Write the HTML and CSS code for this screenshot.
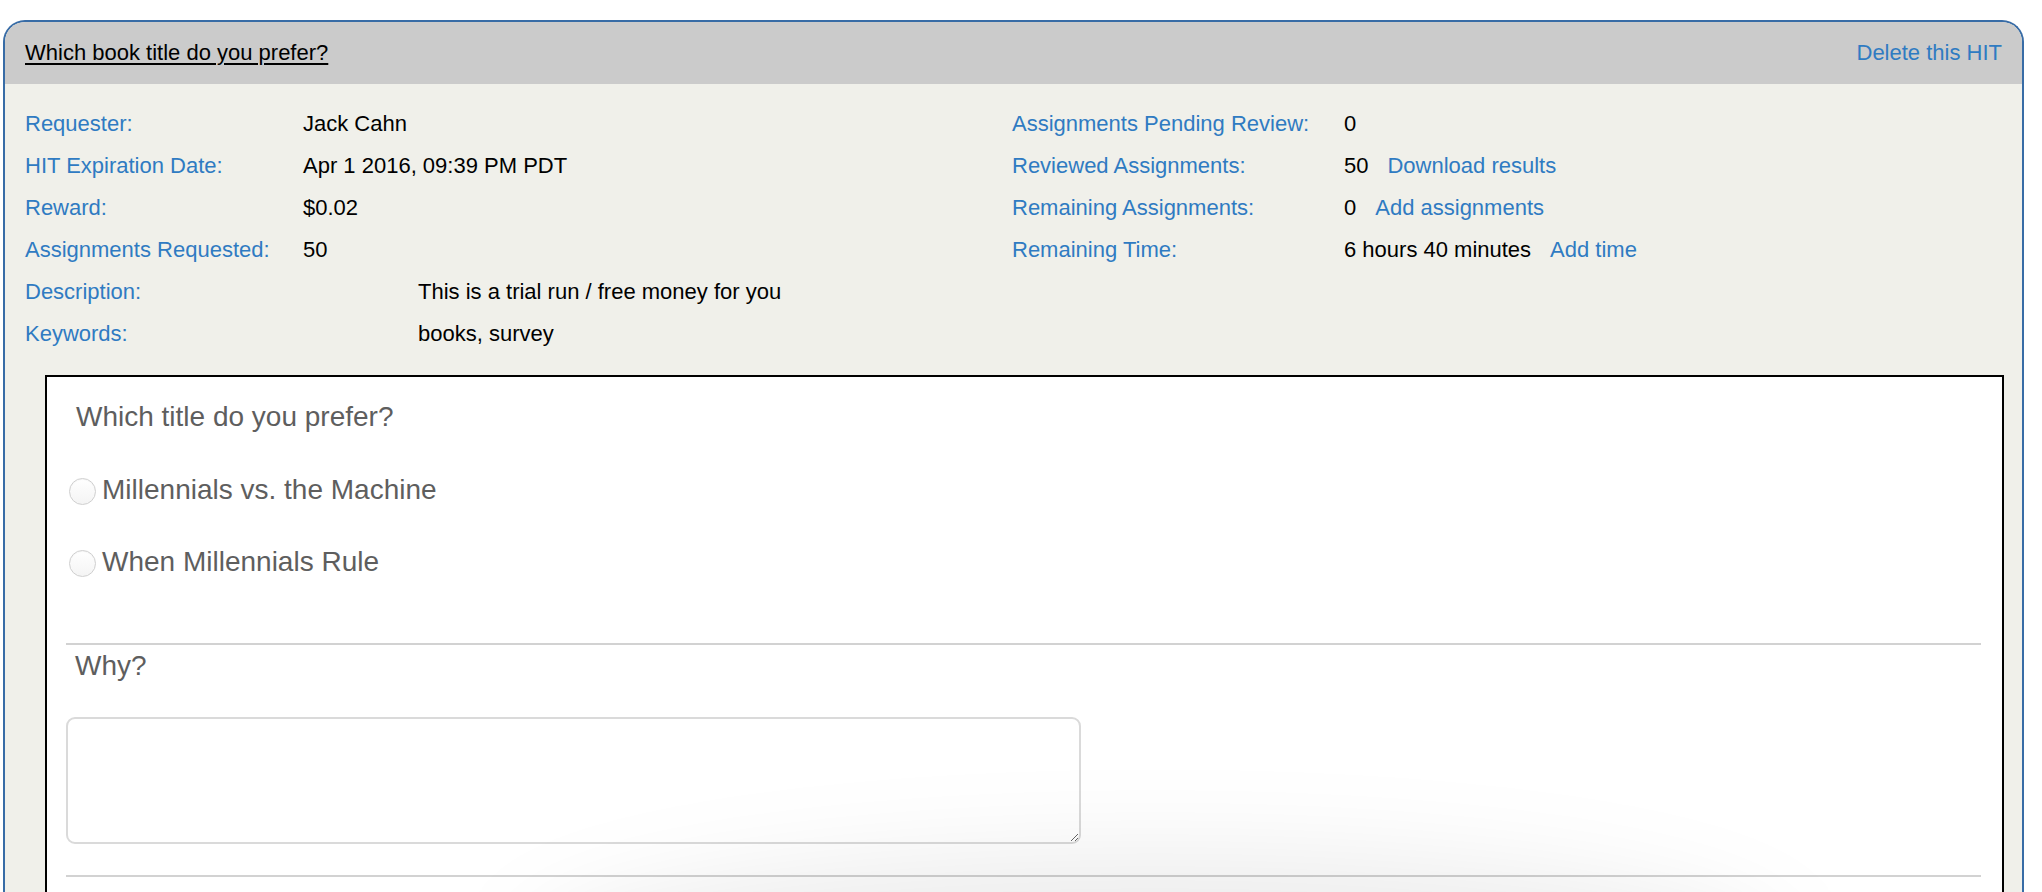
FILE: index.html
```html
<!DOCTYPE html>
<html lang="en">
<head>
<meta charset="utf-8">
<title>Which book title do you prefer?</title>
<link rel="stylesheet" href="styles.css">
</head>
<body>
<div class="hit">
  <div class="hit-head">
    <a class="hit-title" href="#">Which book title do you prefer?</a>
    <a class="link" href="#">Delete this HIT</a>
  </div>
  <div class="hit-body">
    <div class="meta-top">
      <div class="lbl">Requester:</div><div class="val">Jack Cahn</div>
      <div class="lbl">Assignments Pending Review:</div><div class="val">0</div>

      <div class="lbl">HIT Expiration Date:</div><div class="val">Apr 1 2016, 09:39 PM PDT</div>
      <div class="lbl">Reviewed Assignments:</div><div class="val">50<a class="link act" href="#">Download results</a></div>

      <div class="lbl">Reward:</div><div class="val">$0.02</div>
      <div class="lbl">Remaining Assignments:</div><div class="val">0<a class="link act" href="#">Add assignments</a></div>

      <div class="lbl">Assignments Requested:</div><div class="val">50</div>
      <div class="lbl">Remaining Time:</div><div class="val">6 hours 40 minutes<a class="link act" href="#">Add time</a></div>
    </div>
    <div class="meta-bottom">
      <div class="lbl">Description:</div><div class="val">This is a trial run / free money for you</div>
      <div class="lbl">Keywords:</div><div class="val">books, survey</div>
    </div>

    <div class="preview">
      <div class="q-title">Which title do you prefer?</div>
      <label class="opt first"><input type="radio" name="title"><span>Millennials vs. the Machine</span></label>
      <label class="opt"><input type="radio" name="title"><span>When Millennials Rule</span></label>
      <div class="rule r1"></div>
      <div class="q-why">Why?</div>
      <textarea class="why-box"></textarea>
      <div class="rule r2"></div>
    </div>
  </div>
</div>
<div class="shade"></div>
</body>
</html>
```

FILE: styles.css
```css
html, body {
  margin: 0;
  padding: 0;
  background: #ffffff;
  font-family: "Liberation Sans", Arial, Helvetica, sans-serif;
  font-size: 22px;
  color: #000;
  overflow: hidden;
  height: 892px;
}

body {
  padding: 20px 18px 0 3px;
  box-sizing: border-box;
  position: relative;
}

.hit {
  border: 2px solid #386ca6;
  border-bottom: none;
  border-radius: 22px 22px 0 0;
  background: #f0f0ea;
  overflow: hidden;
  height: 900px;
}

.hit-head {
  background: #cbcbcb;
  height: 62px;
  display: flex;
  align-items: center;
  justify-content: space-between;
  padding: 0 20px 0 20px;
}

.hit-title {
  color: #000;
  text-decoration: underline;
  text-underline-offset: 3px;
}

.link {
  color: #2f7bc2;
  text-decoration: none;
}

.act {
  margin-left: 19px;
}

.hit-body {
  padding: 19px 18px 0 20px;
}

.meta-top {
  display: grid;
  grid-template-columns: 278px 709px 332px auto;
  line-height: 42px;
}

.meta-bottom {
  display: grid;
  grid-template-columns: 393px auto;
  line-height: 42px;
}

.lbl {
  color: #2f7bc2;
  white-space: nowrap;
}

.val {
  color: #000;
  white-space: nowrap;
}

.preview {
  margin: 20px 0 0 20px;
  border: 2px solid #000;
  background: #fff;
  padding: 24px 21px 0 19px;
  height: 600px;
  color: #5e5e5e;
}

.q-title {
  font-size: 28px;
  line-height: 32px;
  padding-left: 10px;
}

.opt {
  display: flex;
  align-items: center;
  height: 40px;
  font-size: 28px;
  margin-top: 32px;
}

.opt.first {
  margin-top: 37px;
}

.opt input {
  appearance: none;
  -webkit-appearance: none;
  width: 27px;
  height: 27px;
  margin: 3px 6px 0 3px;
  border: 1px solid #cfcfcf;
  border-radius: 50%;
  background: linear-gradient(#ffffff, #f4f4f4);
  box-shadow: inset 0 1px 1px rgba(0,0,0,0.04);
  flex: none;
}

.rule {
  height: 2px;
  background: #d2d2d2;
}

.r1 {
  margin-top: 61px;
}

.q-why {
  font-size: 28px;
  line-height: 32px;
  padding-left: 9px;
  margin-top: 5px;
}

.why-box {
  display: block;
  margin-top: 35px;
  width: 1015px;
  height: 127px;
  box-sizing: border-box;
  border: 2px solid #dadada;
  border-radius: 9px;
  background: #fff;
  font-family: inherit;
  outline: none;
}

.r2 {
  margin-top: 31px;
}

.shade {
  position: absolute;
  left: 520px;
  top: 850px;
  width: 1270px;
  height: 220px;
  border-radius: 50%;
  background: rgba(0, 0, 0, 0.07);
  filter: blur(45px);
  pointer-events: none;
}
```
